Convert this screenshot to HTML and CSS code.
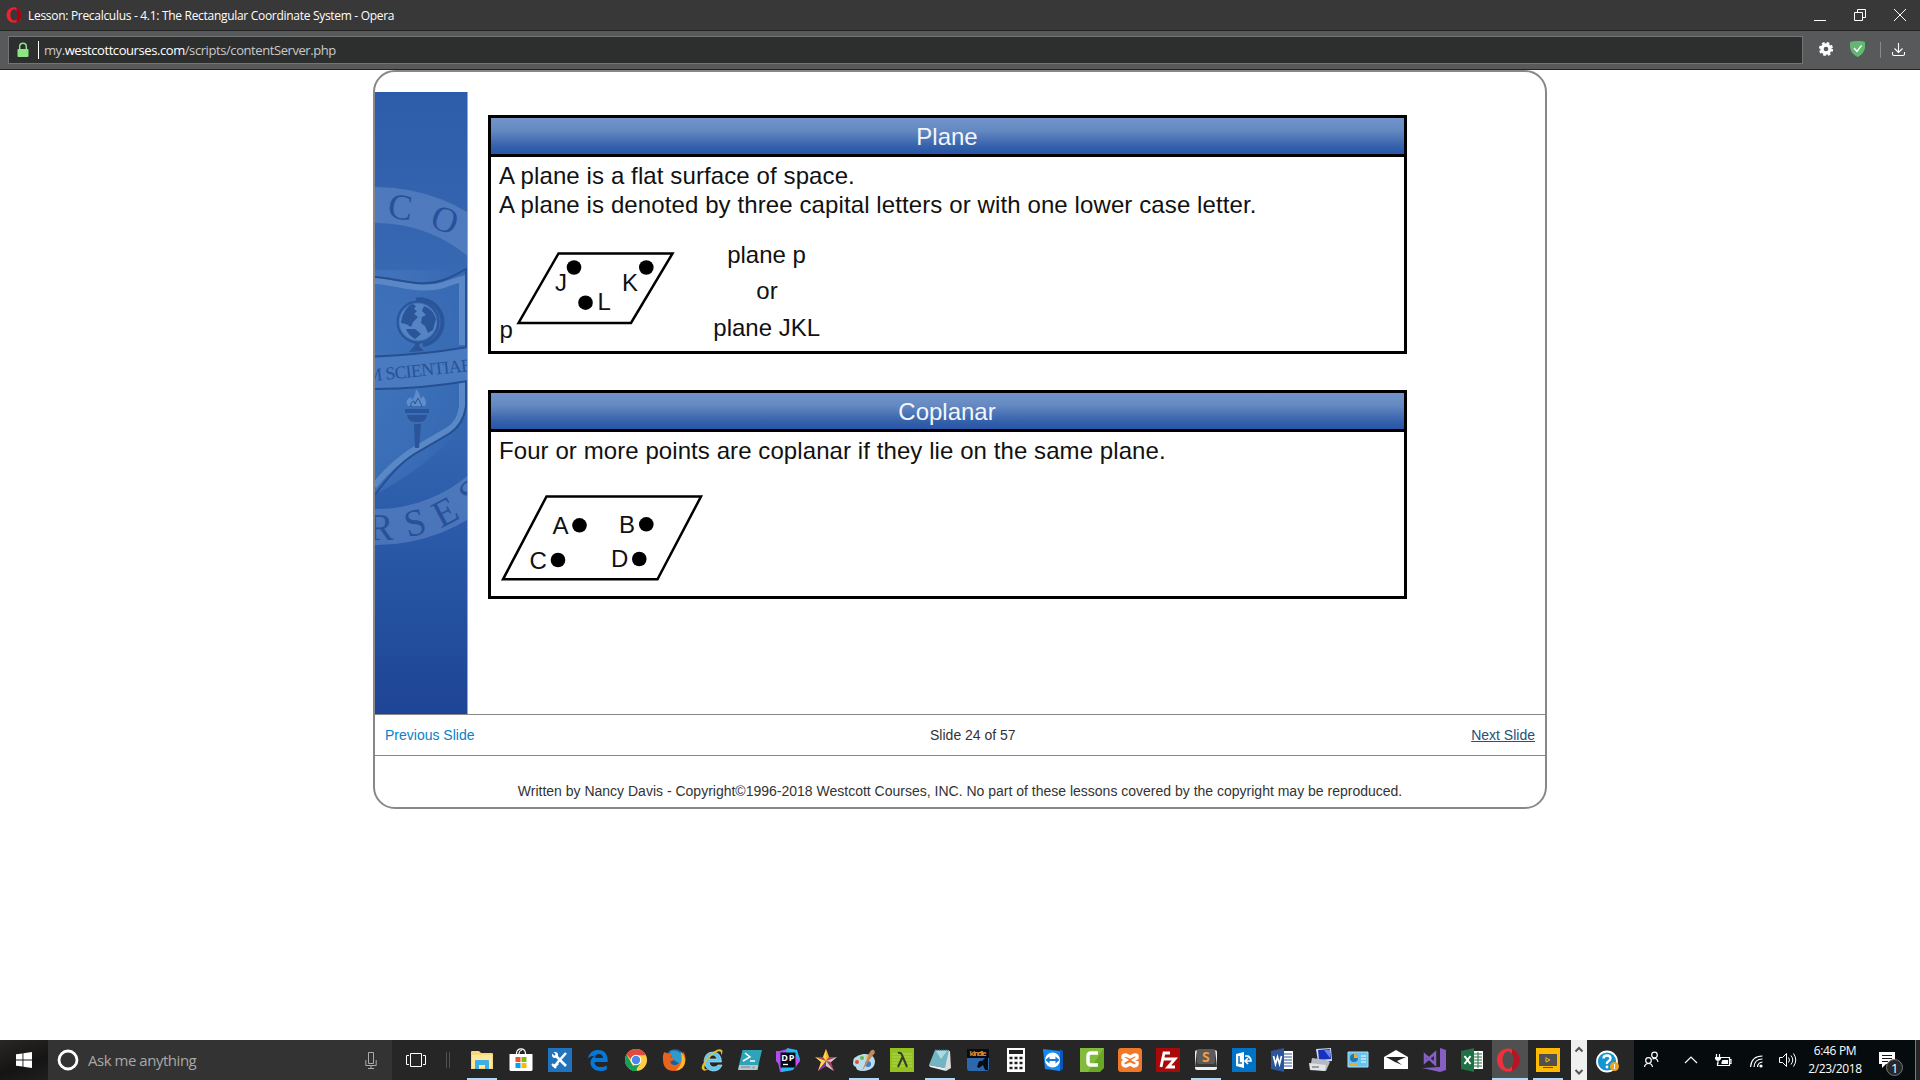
FILE: index.html
```html
<!DOCTYPE html>
<html lang="en">
<head>
<meta charset="utf-8">
<title>Lesson: Precalculus - 4.1: The Rectangular Coordinate System</title>
<link rel="stylesheet" href="styles.css">
</head>
<body>
<header class="titlebar">
  <svg class="logo" width="16" height="16" viewBox="0 0 16 16"><ellipse cx="8" cy="8" rx="7.500" ry="7.800" fill="#f5202f"/><path d="M10.500 .7c6.500 2.500 6.500 12 0 14.600z" fill="#a70014"/><ellipse cx="8" cy="8" rx="3.700" ry="5.700" fill="#383838"/></svg>
  <span class="window-title">Lesson: Precalculus - 4.1: The Rectangular Coordinate System - Opera</span>
  <svg class="window-buttons" width="100" height="30" viewBox="1810 0 100 30" fill="none" stroke="#fff"><path d="M1814 20.500h12M1854.500 12.500h8v8h-8zM1857.500 12v-2.500h8v8h-2.500M1894 9l12 12M1906 9l-12 12"/></svg>
</header>
<div class="toolbar">
  <div class="address">
    <svg width="12" height="16" viewBox="0 0 12 16"><path d="M2.700 8V4.500a3.300 3.300 0 0 1 6.600 0V8" fill="none" stroke="#8de584" stroke-width="1.500"/><rect x="0.500" y="7" width="11" height="8" rx="1" fill="#8de584"/></svg>
    <i class="caret"></i>
    <span class="url">my.<b>westcottcourses.com</b>/scripts/contentServer.php</span>
  </div>
  <svg class="tools" width="100" height="38" viewBox="1810 31 100 38">
    <circle cx="1826" cy="49" r="5.700" fill="#fff"/><circle cx="1826" cy="49" r="6" fill="none" stroke="#fff" stroke-width="2.200" stroke-dasharray="2.600 2.112"/><circle cx="1826" cy="49" r="2.300" fill="#58595b"/>
    <path d="M1850 42q7.500-2 15 0v5q-1 7-7.500 10-6.500-3-7.500-10z" fill="#67b279"/><path d="M1857.500 41q4 0 7.500 1v5q-1 7-7.500 10z" fill="#5fbb6d"/><path d="M1854 48l3 3.500 4.500-6" fill="none" stroke="#fff" stroke-width="1.400"/>
    <path d="M1880.500 42v16" stroke="#8a8b8c"/>
    <path d="M1898.500 43v9M1894.500 48.500l4 4 4-4M1892.500 52v2q0 1.500 1.500 1.500h9q1.500 0 1.500-1.500v-2" fill="none" stroke="#fff" stroke-width="1.100"/>
  </svg>
</div>
<main class="page">
  <section class="lesson">
    <div class="stage">
      <svg class="crest" width="93" height="622" viewBox="375 92 93 622">
        <defs>
          <linearGradient id="side" x1="0" y1="0" x2="0" y2="1"><stop offset="0" stop-color="#2d5caa"/><stop offset=".35" stop-color="#3a6bb4"/><stop offset=".5" stop-color="#3669b2"/><stop offset=".72" stop-color="#2959a8"/><stop offset="1" stop-color="#1e4495"/></linearGradient>
          <radialGradient id="glow" cx="0" cy=".5" r="1"><stop offset="0" stop-color="#5488cb" stop-opacity=".6"/><stop offset="1" stop-color="#5488cb" stop-opacity="0"/></radialGradient>
        </defs>
        <path d="M375 92h93v622h-93z" fill="url(#side)"/>
        <path d="M375 270h90v150q-20 35-90 75z" fill="url(#glow)"/>
        <circle cx="376" cy="366" r="161" fill="none" stroke="#6a90cc" stroke-opacity=".5" stroke-width="36"/>
        <path d="M375 278C397 279 420 290 445 280Q455 276 468 268V405Q465 424 450 433L413 456Q395 467 375 490z" fill="#376cb5" fill-opacity=".55"/>
        <path d="M375 281C399 282 423 294 449 283L462 279V345M462 382V406Q460 423 448 430L412 451Q392 464 374 486" fill="none" stroke="#5a88c7" stroke-width="6"/>
        <path d="M375 277C397 278 422 289 446 279Q456 275 466 269V347M466 380V407Q463 425 449 434L413 455Q395 467 375 495" fill="none" stroke="#264f93" stroke-width="2"/>
        <path d="M375 357Q421 355 468 347V381Q421 389 375 389z" fill="#4a7bc0"/><path d="M375 356.500Q421 355 468 347M375 389Q421 389 468 381" fill="none" stroke="#264f93" stroke-width="2"/>
        <g fill="none" stroke="#2a5599"><circle cx="418" cy="322" r="20.500" stroke-width="2"/><path d="M416 299.500a23 23 0 0 1 7 45.500" stroke-width="4"/></g>
        <circle cx="418" cy="322" r="18.500" fill="#5584c4"/>
        <path d="M402 317q4-11 11-13l3 2-2 3 3 2-3 3 4 3-5 5-2 5-5-3-5-1zM424 306q9 3 12 13l-3 11-5 3-3-7-4-3 1-6 4-2-4-4zM406 329l9 0 6 5-6 5q-7-4-9-10z" fill="#2a5599"/><path d="M409 352l6-7-1-3h6l-1 4 5 5z" fill="#2a5599"/>
        <g fill="#2a5599"><path d="M405 409h24v4h-24zM407 415h20q-1 7-7 7h-6q-6-1-7-7zM414 424h7l-2 24h-4z"/></g>
        <path d="M408 406q-4-6 3-9l1 3q3-3 4-11 5 6 4 10l3-3q5 6 2 10z" fill="#5f8dcb"/><path d="M411 407q-1-5 3-6l1 3 3-6 3 6 1 3" fill="none" stroke="#2a5599"/>
        <g font-family="Liberation Serif, serif" fill="#28519a">
          <text font-size="36" text-anchor="middle" transform="translate(399 219) rotate(7)">C</text>
          <text font-size="36" text-anchor="middle" transform="translate(441 231) rotate(19)">O</text>
          <text font-size="18" x="367" y="381" textLength="106" transform="rotate(-6 375 381)">M SCIENTIAE</text>
          <text font-size="38" text-anchor="middle" transform="translate(381 540) rotate(-1)">R</text>
          <text font-size="38" text-anchor="middle" transform="translate(418 535) rotate(-14)">S</text>
          <text font-size="38" text-anchor="middle" transform="translate(451 523) rotate(-28)">E</text>
          <text font-size="38" text-anchor="middle" transform="translate(480 502) rotate(-42)">S</text>
        </g>
        <path d="M467.500 92v622" stroke="#8fa9d3"/>
      </svg>
      <div class="slide">
        <article class="definition plane">
          <h2>Plane</h2>
          <p>A plane is a flat surface of space.<br>A plane is denoted by three capital letters or with one lower case letter.</p>
          <svg class="diagram" width="913" height="132" viewBox="491 219 913 132">
            <path d="M558.500 253.500H672.500L631 323H518.500z"/>
            <circle cx="574" cy="267.500" r="7.300"/><circle cx="646.300" cy="267.500" r="7.300"/><circle cx="585.500" cy="302.700" r="7.300"/>
            <text x="555" y="290.500">J</text><text x="622" y="290.500">K</text><text x="597.500" y="310">L</text><text x="499.500" y="338">p</text>
            <g text-anchor="middle"><text x="766.500" y="263">plane p</text><text x="767" y="299">or</text><text x="766.700" y="336">plane JKL</text></g>
          </svg>
        </article>
        <article class="definition coplanar">
          <h2>Coplanar</h2>
          <p>Four or more points are coplanar if they lie on the same plane.</p>
          <svg class="diagram" width="913" height="131" viewBox="491 465 913 131">
            <path d="M546.500 496.500H701L657.500 579.300H503z"/>
            <circle cx="579.500" cy="525.300" r="7.300"/><circle cx="646.300" cy="524.300" r="7.300"/><circle cx="558" cy="560" r="7.300"/><circle cx="639.300" cy="559" r="7.300"/>
            <text x="552.500" y="534">A</text><text x="619" y="532.500">B</text><text x="529.500" y="568.500">C</text><text x="611" y="567">D</text>
          </svg>
        </article>
      </div>
    </div>
    <nav class="pager"><a class="prev">Previous Slide</a><span class="count">Slide 24 of 57</span><a class="next">Next Slide</a></nav>
    <footer class="copyright">Written by Nancy Davis - Copyright©1996-2018 Westcott Courses, INC. No part of these lessons covered by the copyright may be reproduced.</footer>
  </section>
</main>
<footer class="taskbar">
  <div class="start"><svg width="16" height="16" viewBox="0 0 16 16" fill="#fff"><path d="M0 2.300l6.500-.9v6.100H0zM7.400 1.200L16 0v7.500H7.400zM0 8.500h6.500v6.100L0 13.700zM7.400 8.500H16V16l-8.600-1.200z"/></svg></div>
  <div class="search">
    <svg width="22" height="22" viewBox="0 0 22 22"><circle cx="11" cy="11" r="9" fill="none" stroke="#fff" stroke-width="2.800"/></svg>
    <span>Ask me anything</span>
    <svg width="12" height="17" viewBox="0 0 12 17" fill="none" stroke="#aaa"><path d="M3.500.5h5v11h-5zM.8 8v5.500h10.400V8M6 13.500v3M3 16.500h6"/></svg>
  </div>
  <svg class="taskview" width="73" height="40" viewBox="392 1040 73 40" fill="none" stroke="#fff"><path d="M410.500 1053.500h11v13h-11zM409 1055.500h-2.500v9h2.500M423 1055.500h2.500v9H423"/><path d="M446.500 1052v16M449.500 1052v16" stroke="#505050"/></svg>
  <div class="apps">
    <div class="app open first"><svg viewBox="0 0 24 24"><path d="M1 4q0-1 1-1h7l2 2h11q1 0 1 1v15H1z" fill="#f6d77a"/><path d="M2 7h20v13H2z" fill="#ffe79b"/><path d="M5 13q0-1 1-1h12q1 0 1 1v8h-4v-4H9v4H5z" fill="#3cb0e5"/></svg></div>
    <div class="app second"><svg viewBox="0 0 24 24"><path d="M7.500 7V5Q8 .8 12 .8t4.500 4.200v2M10 7V5q.5-2.500 3-3" fill="none" stroke="#fff" stroke-width="1.200"/><path d="M.5 6h23v15.500q0 1.500-1.500 1.500H2Q.5 23 .5 21.500z" fill="#fff"/><path d="M6.500 9h5v5h-5z" fill="#f05125"/><path d="M12.500 9h5v5h-5z" fill="#7eba00"/><path d="M6.500 15h5v5h-5z" fill="#00a3ee"/><path d="M12.500 15h5v5h-5z" fill="#ffb800"/></svg></div>
    <div class="app"><svg viewBox="0 0 24 24"><path d="M0 0h24v24H0z" fill="#2173bd"/><path d="M8 8l10 10M18 5L9 15" stroke="#fff" stroke-width="2.600"/><circle cx="7" cy="7" r="3" fill="#fff"/><path d="M4 18l5-4 2 2-4 4z" fill="#fff"/><path d="M3.500 3.500l3.500 3.500" stroke="#2173bd" stroke-width="2"/><path d="M4 16l4 4" stroke="#fff" stroke-width="2"/></svg></div>
    <div class="app"><svg viewBox="0 0 24 24"><path d="M2 10.500C3 4.500 7.500 2 12 2c7 0 10 5 9.700 12H8.500c.3 6 7.500 6 12.200 3.500v4C13 25.500 4.500 21 4.500 15c0-4 2.500-6 5-7.500-4 .3-6.500 1.500-7.500 3zM9 10h8q-.3-4-4-4t-4 4z" fill="#0878d8" fill-rule="evenodd"/></svg></div>
    <div class="app"><svg viewBox="0 0 24 24"><circle cx="12" cy="12" r="11" fill="#ffce44"/><path d="M2.500 6.500A11 11 0 0 1 22 7.300H12v9.500z" fill="#e14a3c"/><path d="M2.500 6.500L9 18l3-1 1 6A11 11 0 0 1 2.500 6.500z" fill="#159f5b"/><path d="M9.500 16h6.500l-5 7q3 0 1-.2z" fill="#159f5b"/><circle cx="12" cy="12" r="5.300" fill="#fff"/><circle cx="12" cy="12" r="4.200" fill="#4a88ed"/></svg></div>
    <div class="app"><svg viewBox="0 0 24 24"><circle cx="13" cy="11" r="10" fill="#1b5f9f"/><path d="M8 3q8-2 13 5l-3 8-8-5z" fill="#2c9ccf"/><path d="M2 4l4 1.500q3-1 5 0-3 1-2 4l3 1q-1 3-4 3 2 5 7 3 5-2 5-8l1-5q3 4 2.500 9-1 10.500-11.500 10.500T1 12Q.500 7 2 4z" fill="#e8631c"/><path d="M18.500 3.500q8 8 2 16-3 3-7 3 9-7 5-19z" fill="#fdb933"/></svg></div>
    <div class="app"><svg viewBox="0 0 24 24"><path d="M4 13Q5 4 13 4q8 0 8.500 10H9q1 5 5 5 2.500 0 4-2h4q-2 6-9 6-8-1-9-10zm5-2h8q-1-4-4-4t-4 4z" fill="#5dc8f2" fill-rule="evenodd" stroke="#c8f1ff" stroke-width=".6"/><path d="M3 22Q-1 20 7 10 16 0 21 1.500q3 1 0 6 1-5-3-4-5 1-11 9Q3 19 5 21q2 1 5-1-5 4-7 2z" fill="#eac025"/></svg></div>
    <div class="app"><svg viewBox="0 0 24 24"><path d="M4.500 2H24l-3.500 15H1z" fill="#2fa3b8"/><path d="M1 17h19.500l-1 5H0z" fill="#b9c5cb"/><path d="M7 5l5 4-7 4M12 13h5" fill="none" stroke="#fff" stroke-width="1.500"/><path d="M3 19h9" stroke="#78858b"/><circle cx="15.500" cy="19.500" r="1" fill="#60b55d"/></svg></div>
    <div class="app"><svg viewBox="0 0 24 24"><path d="M0 4l11-3 13 9-8 12-12 2z" fill="#b24df2"/><path d="M11 0l10 2 3 10-7 10-12 2z" fill="#22b8f0"/><path d="M0 3l8 1-2 16-6-7z" fill="#b14df0"/><path d="M20 8l4 5-5 7z" fill="#c04df0"/><path d="M4.500 4.500h15v15h-15z" fill="#080818"/><text x="5.300" y="12.500" font-size="9" font-weight="700" fill="#fff" textLength="13">DP</text><path d="M7 16.500h5" stroke="#fff" stroke-width="1.300"/></svg></div>
    <div class="app"><svg viewBox="0 0 24 24"><path d="M12 1l3 8 8 0-6 5 3 9-8-5-8 5 3-9-6-5 8 0z" fill="#a94458"/><path d="M12 1v12L9 9zM1 9l11 4-5 1zM4 23l3-9 5-1z" fill="#ffd744"/><path d="M12 13l11-4-6 5zM12 13v5l8 5z" fill="#d1c9cd"/><path d="M12 1l3 8-3 4z" fill="#f2b82e"/><path d="M12 13l-8 10 8-5z" fill="#7a35ad"/></svg></div>
    <div class="app open"><svg viewBox="0 0 24 24"><path d="M1 16Q0 8 11 6q11-1 12 7 0 9-12 10-7 0-7-4-2 0-3-3z" fill="#b9dcea"/><circle cx="5" cy="14" r="2" fill="#e44b32"/><circle cx="10" cy="10" r="2" fill="#61b853"/><circle cx="16" cy="9" r="2" fill="#edc439"/><circle cx="16" cy="16" r="3" fill="#3b80ce"/><path d="M22 2q2 3-1 5L10 23l7-17q2-5 5-4z" fill="#c58955"/></svg></div>
    <div class="app"><svg viewBox="0 0 24 24"><path d="M0 0h24v24H0z" fill="#94c11f"/><path d="M2 6h20M2 9h20M2 12h20M2 15h20M2 18h20" stroke="#b1d94e"/><path d="M8 5q3-1 4 2l5 12M12.500 9L8 19" fill="none" stroke="#343c28" stroke-width="2"/></svg></div>
    <div class="app open"><svg viewBox="0 0 24 24"><path d="M8 2l14 1 1 17-5 3z" fill="#d9dddd"/><path d="M7 2h14l-4 18L1 17z" fill="#72b4c2"/><path d="M8 3h11l-6 8z" fill="#aed9df"/><path d="M1 17l16 3 1 3-16-4z" fill="#e9ecec"/><path d="M7 2h14" stroke="#4b7680" stroke-dasharray="1 1"/></svg></div>
    <div class="app"><svg viewBox="0 0 24 24"><rect x="1" y="1" width="22" height="22" rx="3" fill="#2c68ad"/><path d="M1 1h22v9H1z" fill="#080b12"/><text x="3.500" y="8" font-size="7.500" font-weight="700" fill="#e98d23" textLength="17">kindle</text><path d="M12 16q1-4 4-3l3-3h3v12h-3l-2-5-4 3-2-1z" fill="#080b12"/></svg></div>
    <div class="app"><svg viewBox="0 0 24 24"><path d="M3 0h18v24H3z" fill="#fff"/><path d="M5 2h14v4H5z" fill="#202020"/><path d="M5.500 10h13.500M5.500 15h13.500M5.500 20h13.500" stroke="#202020" stroke-width="2.500" stroke-dasharray="3 2"/></svg></div>
    <div class="app"><svg viewBox="0 0 24 24"><path d="M1 1l17 2v20L3 21z" fill="#178af2"/><path d="M18 1l3 2v18l-3 2z" fill="#0957bc"/><circle cx="10.500" cy="12" r="7.500" fill="#fff"/><path d="M3.500 12l4-3.500V11h6V8.500l4 3.500-4 3.500V13h-6v2.500z" fill="#167bd5"/></svg></div>
    <div class="app"><svg viewBox="0 0 24 24"><path d="M0 0h24v20l-4 4H0z" fill="#6aa727"/><path d="M0 0h24L8 24H0z" fill="#83bb3c"/><path d="M18 5h-7q-3 0-3 3v6q0 3 3 3h7" fill="none" stroke="#fff" stroke-width="3.500"/></svg></div>
    <div class="app"><svg viewBox="0 0 24 24"><rect width="24" height="24" rx="3" fill="#ef7829"/><path d="M8 7q-4 0-3 3l3 2-3 2q-1 4 3 4l4-2 4 2q4 0 3-4l-3-2 3-2q1-4-3-3l-4 2z" fill="none" stroke="#fff" stroke-width="3.300"/></svg></div>
    <div class="app"><svg viewBox="0 0 24 24"><path d="M0 0h24v24H0z" fill="#aa0909"/><path d="M14 5H8L5 19M6 11h6M12 11h7l-7 8h7" fill="none" stroke="#fff" stroke-width="2.800"/></svg></div>
    <div class="app open"><svg viewBox="0 0 24 24"><rect x="1" y="2" width="22" height="20" rx="2" fill="#eee"/><path d="M3 1h18l2 18H1z" fill="#393939"/><rect x="3" y="1" width="18" height="15" rx="2" fill="#5b5b5b"/><text x="8" y="13.500" font-size="14" font-weight="700" fill="#f39b3e">S</text></svg></div>
    <div class="app"><svg viewBox="0 0 24 24"><path d="M0 0h24v24H0z" fill="#0173c7"/><path d="M4 6l8-2v16l-8-2z" fill="#fff"/><path d="M7 8v7h3" fill="none" stroke="#0173c7" stroke-width="1.500"/><path d="M13 8h3q3 2 3 5h-5M16 10l-3 3 3 3" fill="none" stroke="#fff" stroke-width="1.600"/></svg></div>
    <div class="app"><svg viewBox="0 0 24 24"><path d="M12 3h11v18H12z" fill="#fff"/><path d="M14 6h8M14 9h8M14 12h8M14 15h8M14 18h8" stroke="#2b579a"/><path d="M1 3l13-3v24L1 21z" fill="#2b579a"/><path d="M3.500 8l2 8 2-7 2 7 2-8" fill="none" stroke="#fff" stroke-width="1.700"/></svg></div>
    <div class="app"><svg viewBox="0 0 24 24"><path d="M8 1l15-1 1 13-14 1z" fill="#d5ddee"/><path d="M10 2l12-1 1 10-12 1z" fill="#1831bc"/><path d="M16 2h6v8z" fill="#6486ed"/><path d="M4 10l14 2 4 2-4 9-16-2z" fill="#b4bbc2"/><path d="M1 15l17 2-1 6-15-1z" fill="#e2e4e6"/><path d="M4 19h7" stroke="#555"/></svg></div>
    <div class="app"><svg viewBox="0 0 24 24"><path d="M2 4h20v15H2z" fill="#69c3ef" stroke="#a4e1fa"/><circle cx="8" cy="10" r="4" fill="#2575ae"/><path d="M8 6v4h4q0-4-4-4z" fill="#f0ac32"/><path d="M15 8h5M15 11h5M15 14h5" stroke="#fff"/><path d="M4 16.500h7" stroke="#f0ac32" stroke-width="1.500"/></svg></div>
    <div class="app"><svg viewBox="0 0 24 24"><path d="M0 9l12-7 12 7v12H0z" fill="#fff"/><path d="M2 9h20l-9 4 5 4-7-3z" fill="#242424"/></svg></div>
    <div class="app"><svg viewBox="0 0 24 24"><path d="M18 0l6 2v20l-6 2-18-4 18-1z" fill="#865fc5"/><path d="M3 7l10 9V5L3 14z" fill="none" stroke="#865fc5" stroke-width="2.500"/></svg></div>
    <div class="app"><svg viewBox="0 0 24 24"><path d="M12 3h11v18H12z" fill="#fff"/><path d="M14 6h8M14 9h8M14 12h8M14 15h8M14 18h8M18 4v16" stroke="#207245"/><path d="M1 3l13-3v24L1 21z" fill="#207245"/><path d="M4.500 8l6 8M10.500 8l-6 8" stroke="#fff" stroke-width="2"/></svg></div>
    <div class="app open active"><svg viewBox="0 0 24 24"><ellipse cx="12" cy="12" rx="11" ry="11.500" fill="#f0303c"/><path d="M16 1a11 11.500 0 0 1 0 22z" fill="#b81425"/><ellipse cx="12" cy="12" rx="5.500" ry="8.800" fill="#505050"/></svg></div>
    <div class="app open"><svg viewBox="0 0 24 24"><path d="M0 0h24v24H0z" fill="#ffb900"/><path d="M3 6h18v12H3zM7 19h10v1H7z" fill="#50504f"/><path d="M10 9v5l4-2-3-1.500" fill="none" stroke="#ffb900"/></svg></div>
  </div>
  <svg class="scroller" width="16" height="40" viewBox="0 0 16 40"><path d="M0 0h16v40H0z" fill="#f0f0f0"/><path d="M4.500 11.500L8 8l3.500 3.500M4.500 30L8 33.500 11.500 30" fill="none" stroke="#555" stroke-width="2"/></svg>
  <div class="help"><svg width="24" height="24" viewBox="0 0 24 24"><circle cx="11" cy="11.500" r="10" fill="#1594d2" stroke="#fff" stroke-width="1.800"/><path d="M7.500 8.500q0-3 3.500-3t3.500 3q0 1.500-2 2.700T11 14" fill="none" stroke="#fff" stroke-width="2.300"/><circle cx="11" cy="17" r="1.400" fill="#fff"/><circle cx="18.500" cy="16.500" r="4.500" fill="#efa41b"/><path d="M18.500 14v5" stroke="#fff"/></svg></div>
  <div class="tray">
    <svg width="164" height="40" viewBox="1634 1040 164 40" fill="none" stroke="#fff" stroke-width="1.200">
      <circle cx="1648.500" cy="1060.500" r="2.800"/><path d="M1644.500 1067q.5-3.500 4-3.500t4 3.500"/><circle cx="1654.500" cy="1055" r="2.800"/><path d="M1652.500 1059q4.500-2 5.500 3"/>
      <path d="M1685 1063l6-6 6 6"/>
      <path d="M1721 1057.500h8.500v8h-12v-3M1729.500 1059.500h1.500v4h-1.500M1716.500 1054v3M1719.500 1054v3"/><path d="M1715 1057h6v2q-1 2-3 2t-3-2zM1717.500 1060h1v4h-1zM1722.500 1060h5.500v4h-6.500v-2z" fill="#fff" stroke="none"/>
      <path d="M1750.500 1067q1-11 12-11M1754 1067q.5-8 8.500-8M1757.500 1067q.3-4.500 5-5"/><circle cx="1761" cy="1066" r="1.600" fill="#fff" stroke="none"/>
      <path d="M1779.500 1057.500h3l4-4v13l-4-4h-3zM1788.500 1057.500q2 2.500 0 5M1791 1055.500q3.500 4.500 0 9M1793.500 1053.500q4.500 6.500 0 13" stroke-width="1"/>
    </svg>
    <div class="clock">6:46 PM<br>2/23/2018</div>
    <svg class="notice" width="30" height="40" viewBox="1875 1040 30 40"><path d="M1879 1052h16v12h-9l-4 4v-4h-3z" fill="#fff"/><path d="M1882 1055.500h10M1882 1058.500h10M1882 1061.500h6" stroke="#151515"/><circle cx="1894.500" cy="1067.500" r="8" fill="#25272a" stroke="#777"/><text x="1891" y="1072.500" font-size="13" fill="#fff">1</text></svg>
  </div>
</footer>
</body>
</html>
```
FILE: styles.css
```css
* { box-sizing: border-box; }
body { margin: 0; height: 1080px; overflow: hidden; display: flex; flex-direction: column; background: #fff; font-family: "Open Sans", "Noto Sans", sans-serif; }
svg { display: block; flex: none; }

.titlebar { height: 30px; display: flex; align-items: center; padding: 0 10px 0 6px; background: #383838; color: #fff; font-size: 12px; }
.window-title { margin-left: 6px; letter-spacing: -0.3px; white-space: nowrap; padding-top: 1px; }
.window-buttons { margin-left: auto; }

.toolbar { height: 40px; display: flex; align-items: center; padding: 0 10px 0 8px; background: #58595b; border-top: 1px solid #242424; border-bottom: 1px solid #242424; }
.address { width: 1795px; height: 28px; display: flex; align-items: center; padding-left: 8px; border: 1px solid #737475; background: #2d2f2e; }
.caret { width: 1px; height: 18px; margin-left: 9px; background: #fff; }
.url { margin-left: 5px; font-size: 13px; letter-spacing: -0.42px; color: #c9c9c9; white-space: nowrap; }
.url b { font-weight: 400; color: #fff; }
.tools { margin-left: auto; }

.page { flex: 1; display: flex; justify-content: center; align-items: flex-start; }
.lesson { width: 1174px; height: 739px; border: 2px solid #888; border-radius: 22px; padding-top: 20px; font: 14px/20px "Liberation Sans", Arial, sans-serif; color: #333; }
.stage { height: 622px; display: flex; }
.slide { padding: 23px 0 0 20px; display: flex; flex-direction: column; gap: 36px; }
.definition { width: 919px; border: 3px solid #000; color: #111; font-size: 24px; }
.plane { height: 239px; }
.coplanar { height: 209px; }
.definition h2 { margin: 0; height: 39px; padding-right: 1px; border-bottom: 3px solid #000; background: linear-gradient(#7394c9, #6489c2 35%, #3460ab 80%, #2855a7); color: #f3f6fb; font-size: 24px; font-weight: 400; line-height: 38px; text-align: center; }
.definition p { margin: 0; padding: 4px 0 0 8px; line-height: 29px; letter-spacing: 0.105px; white-space: nowrap; }
.coplanar p { letter-spacing: 0.08px; }
.diagram path { fill: none; stroke: #000; stroke-width: 2.500px; }
.diagram text { fill: #111; font-size: 24px; }
.pager { height: 42px; display: flex; align-items: center; justify-content: space-between; padding: 0 10px; border-top: 1px solid #888; border-bottom: 1px solid #888; }
.prev { color: #0782c6; }
.next { color: #23527c; text-decoration: underline; }
.copyright { padding-top: 25px; text-align: center; white-space: nowrap; }

.taskbar { height: 40px; display: flex; background: #262626; color: #fff; }
.start { width: 48px; display: flex; align-items: center; justify-content: center; background: linear-gradient(160deg, #282725, #151414 60%, #211f1e); }
.search { width: 344px; display: flex; align-items: center; padding: 0 15px 0 9px; background: #333; color: #a8a8a8; font-size: 15px; }
.search span { margin: 0 auto 0 9px; letter-spacing: -0.47px; }
.apps { width: 1102px; display: grid; grid-template-columns: repeat(29, 38px); }
.app { display: flex; align-items: center; justify-content: center; margin: 0 4px; border-bottom: 2px solid transparent; padding-top: 2px; }
.app svg { width: 24px; height: 24px; }
.open { border-bottom-color: #a9dcf7; }
.first { margin: 0 6px 0 2px; }
.second { margin: 0 5px 0 3px; }
.active { background: #505050; margin: 0 1px; padding-right: 4px; }
.scroller { margin-left: 4px; }
.help { width: 47px; padding: 10px 0 0 9px; }
.tray { flex: 1; display: flex; background: #060c0d; border-right: 1px solid #777; margin-right: 4px; }
.clock { width: 74px; margin-right: 3px; font-size: 12px; line-height: 18px; padding-top: 2px; text-align: center; letter-spacing: -0.35px; }
```
